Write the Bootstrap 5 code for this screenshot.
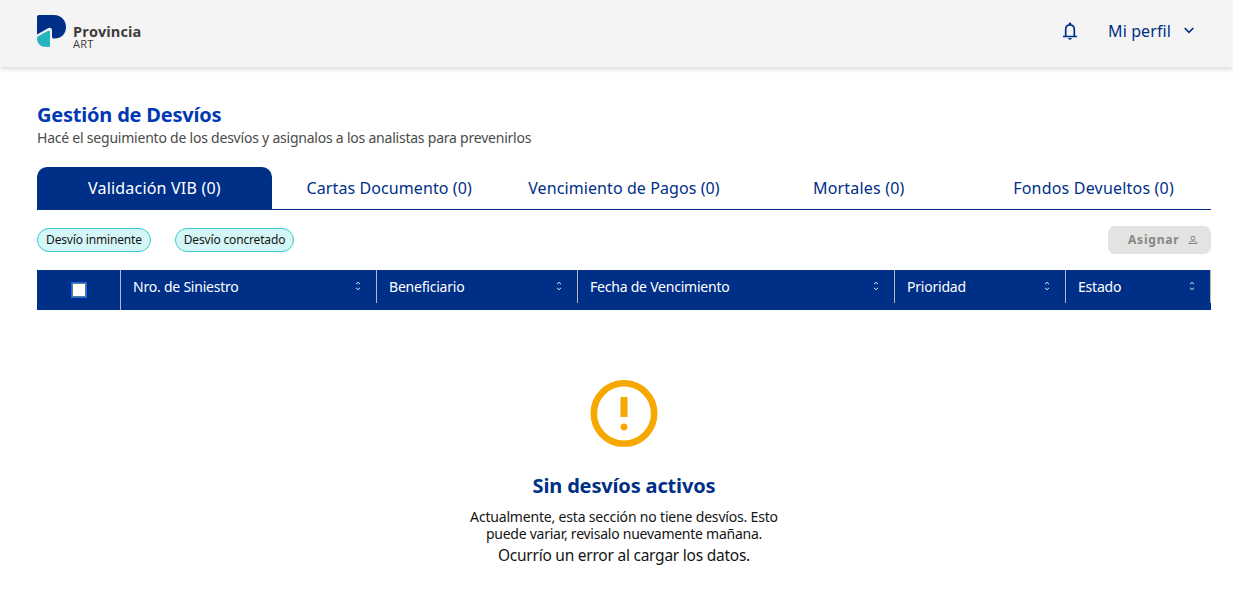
<!DOCTYPE html>
<html lang="es">
<head>
<meta charset="utf-8">
<meta name="viewport" content="width=device-width, initial-scale=1">
<title>Gestión de Desvíos</title>
<link href="https://cdn.jsdelivr.net/npm/bootstrap@5.3.0/dist/css/bootstrap.min.css" rel="stylesheet">
<style>
:root{--navy:#002f87}
body{font-family:"Noto Sans","Open Sans",sans-serif;color:#141414;background:#fff;overflow:hidden}
.topbar{height:67px;background:#f4f4f4;box-shadow:0 2px 5px rgba(0,0,0,.16);padding:0 37px}
.brand-mark{margin-top:15px}
.brand-text{font-family:"Open Sans",sans-serif;color:#3c3c3b;margin:25px 0 0 7px}
.brand-name{font-size:14.5px;font-weight:700;line-height:13px;letter-spacing:.1px}
.brand-unit{font-size:11px;line-height:11px;font-weight:500;letter-spacing:.2px}
.navy{color:var(--navy)}
.topbar-actions{height:61px}
.profile{font-size:16px;line-height:24px;letter-spacing:.1px;margin-left:31px}
.chevron{margin:0 2px 1px 13px}
.page{padding:36px 22px 0 37px}
.title{font-size:20px;font-weight:700;color:#0039b3;line-height:24px;letter-spacing:-.21px;margin:0}
.sub{font-size:14px;line-height:20px;color:#4a4a49;letter-spacing:-.223px;margin-top:1px}
.tabs{border-bottom:1px solid var(--navy);height:43px;margin-top:19px}
.tabs .nav-link{height:43px;padding:0;line-height:42px;font-size:16px;color:var(--navy);border-radius:10px 10px 0 0;letter-spacing:.2px}
.tabs .nav-link.active{background:var(--navy);color:#fff}
.tabs .nav-link.long{letter-spacing:.09px}
.filters{margin-top:16px;height:28px}
.chip{height:24px;border:1px solid #3cc8cd;border-radius:12px;background:#d4f6f7;font-size:12px;line-height:21px;text-align:center;letter-spacing:-.16px;width:114px}
.chip-wide{width:119px;margin-left:24px}
.assign{width:103px;height:28px;background:#e3e3e1;color:#878786;border-radius:7px;font-size:12px;font-weight:700;padding:0 13px 0 20px;letter-spacing:.8px}
.grid-head{height:40px;background:var(--navy);color:#fff;font-size:14px;letter-spacing:-.22px;margin-top:16px;display:grid;grid-template-columns:84px 256px 201px 317px 171px 1fr}
.hcell{height:33px;border-right:1px solid #b9b9b9;padding:0 14px 0 12px}
.hcell svg{margin-bottom:1px}
.hcell-check{height:40px;padding:0}
.form-check-input.check-all{width:16px;height:16px;background:#fff;border:1px solid #0a6cff;box-shadow:inset 0 0 0 1px #767676;border-radius:1px;margin:0}
.empty-icon{margin-top:70px}
.empty-title{font-size:20px;font-weight:700;line-height:24px;letter-spacing:-.16px;margin:27px 0 0}
.empty-text{font-size:14px;line-height:17px;margin:10px 0 1px;letter-spacing:-.18px}
.tighter{letter-spacing:-.25px}
.empty-error{font-size:15.500px;line-height:24px;letter-spacing:-.24px;margin:0}
</style>
</head>
<body>
<svg class="d-none" aria-hidden="true"><symbol id="sort" viewBox="0 0 8 10"><path d="M2 3.200L4 1.300L6 3.200M2 6.800L4 8.700L6 6.800" fill="none" stroke="#e4e9f3" stroke-width="1"/></symbol></svg>
<header class="topbar d-flex justify-content-between">
  <div class="d-flex">
    <svg class="brand-mark" width="29" height="32" viewBox="0 0 29 32"><path fill="#002f87" d="M2 0H17C24 0 29 5 29 12S24 23.500 17.500 23.500Q15 23.500 15 22V15Q14.500 12 11.500 13L0 19.500V2Q0 0 2 0Z"/><path fill="#26b4be" d="M0 23Q0 21.500 1.500 21L11 15.800Q13 15 13 17V31Q13 32 12 32H9C4 32 0 29 0 23Z"/></svg>
    <div class="brand-text"><div class="brand-name">Provincia</div><div class="brand-unit">ART</div></div>
  </div>
  <div class="topbar-actions d-flex align-items-center navy">
    <svg width="14" height="18" viewBox="0 0 14 18"><path d="M2.700 14.500V7.500Q2.700 3 7 3T11.300 7.500V14.500M0 14.500H14" fill="none" stroke="currentColor" stroke-width="1.700"/><path d="M5.700 3V1.800a1.300 1.300 0 0 1 2.600 0V3ZM5.200 16H8.800a1.800 1.800 0 0 1-3.600 0Z" fill="currentColor"/></svg>
    <span class="profile">Mi perfil</span>
    <svg class="chevron" width="10" height="7" viewBox="0 0 10 7"><path d="M.7 1L5 5.300L9.300 1" fill="none" stroke="currentColor" stroke-width="1.700"/></svg>
  </div>
</header>
<main class="page">
  <h1 class="title">Gestión de Desvíos</h1>
  <p class="sub mb-0">Hacé el seguimiento de los desvíos y asignalos a los analistas para prevenirlos</p>
  <nav class="tabs nav nav-fill nav-justified flex-nowrap">
    <a class="nav-link active" href="#">Validación VIB (0)</a>
    <a class="nav-link long" href="#">Cartas Documento (0)</a>
    <a class="nav-link long" href="#">Vencimiento de Pagos (0)</a>
    <a class="nav-link" href="#">Mortales (0)</a>
    <a class="nav-link" href="#">Fondos Devueltos (0)</a>
  </nav>
  <div class="filters d-flex align-items-center">
    <span class="chip">Desvío inminente</span>
    <span class="chip chip-wide">Desvío concretado</span>
    <div class="assign ms-auto d-flex align-items-center justify-content-between"><span>Asignar</span>
      <svg width="10" height="10" viewBox="0 0 10 10"><g fill="none" stroke="currentColor"><circle cx="5" cy="3.200" r="1.900"/><path d="M1 8.500V7.800Q2 6 5 6T9 7.800V8.500Z"/></g></svg>
    </div>
  </div>
  <div class="grid-head">
    <div class="hcell hcell-check d-flex align-items-center justify-content-center"><input type="checkbox" class="form-check-input check-all" aria-label="Todos"></div>
    <div class="hcell d-flex align-items-center justify-content-between"><span>Nro. de Siniestro</span><svg width="8" height="10"><use href="#sort"/></svg></div>
    <div class="hcell d-flex align-items-center justify-content-between"><span>Beneficiario</span><svg width="8" height="10"><use href="#sort"/></svg></div>
    <div class="hcell d-flex align-items-center justify-content-between"><span>Fecha de Vencimiento</span><svg width="8" height="10"><use href="#sort"/></svg></div>
    <div class="hcell d-flex align-items-center justify-content-between"><span>Prioridad</span><svg width="8" height="10"><use href="#sort"/></svg></div>
    <div class="hcell d-flex align-items-center justify-content-between"><span>Estado</span><svg width="8" height="10"><use href="#sort"/></svg></div>
  </div>
  <section class="text-center">
    <svg class="empty-icon d-block mx-auto" width="68" height="67" viewBox="0 0 68 67"><circle cx="34" cy="33.500" r="30.200" fill="none" stroke="#f7a800" stroke-width="6.600"/><path fill="#f7a800" d="M30.500 17H37.500V37H30.500Z"/><circle cx="34" cy="47" r="3.400" fill="#f7a800"/></svg>
    <h2 class="empty-title navy">Sin desvíos activos</h2>
    <p class="empty-text">Actualmente, esta sección no tiene desvíos. Esto<br><span class="tighter">puede variar, revisalo nuevamente mañana.</span></p>
    <p class="empty-error">Ocurrío un error al cargar los datos.</p>
  </section>
</main>
<script src="https://cdn.jsdelivr.net/npm/bootstrap@5.3.0/dist/js/bootstrap.bundle.min.js"></script>
</body>
</html>
